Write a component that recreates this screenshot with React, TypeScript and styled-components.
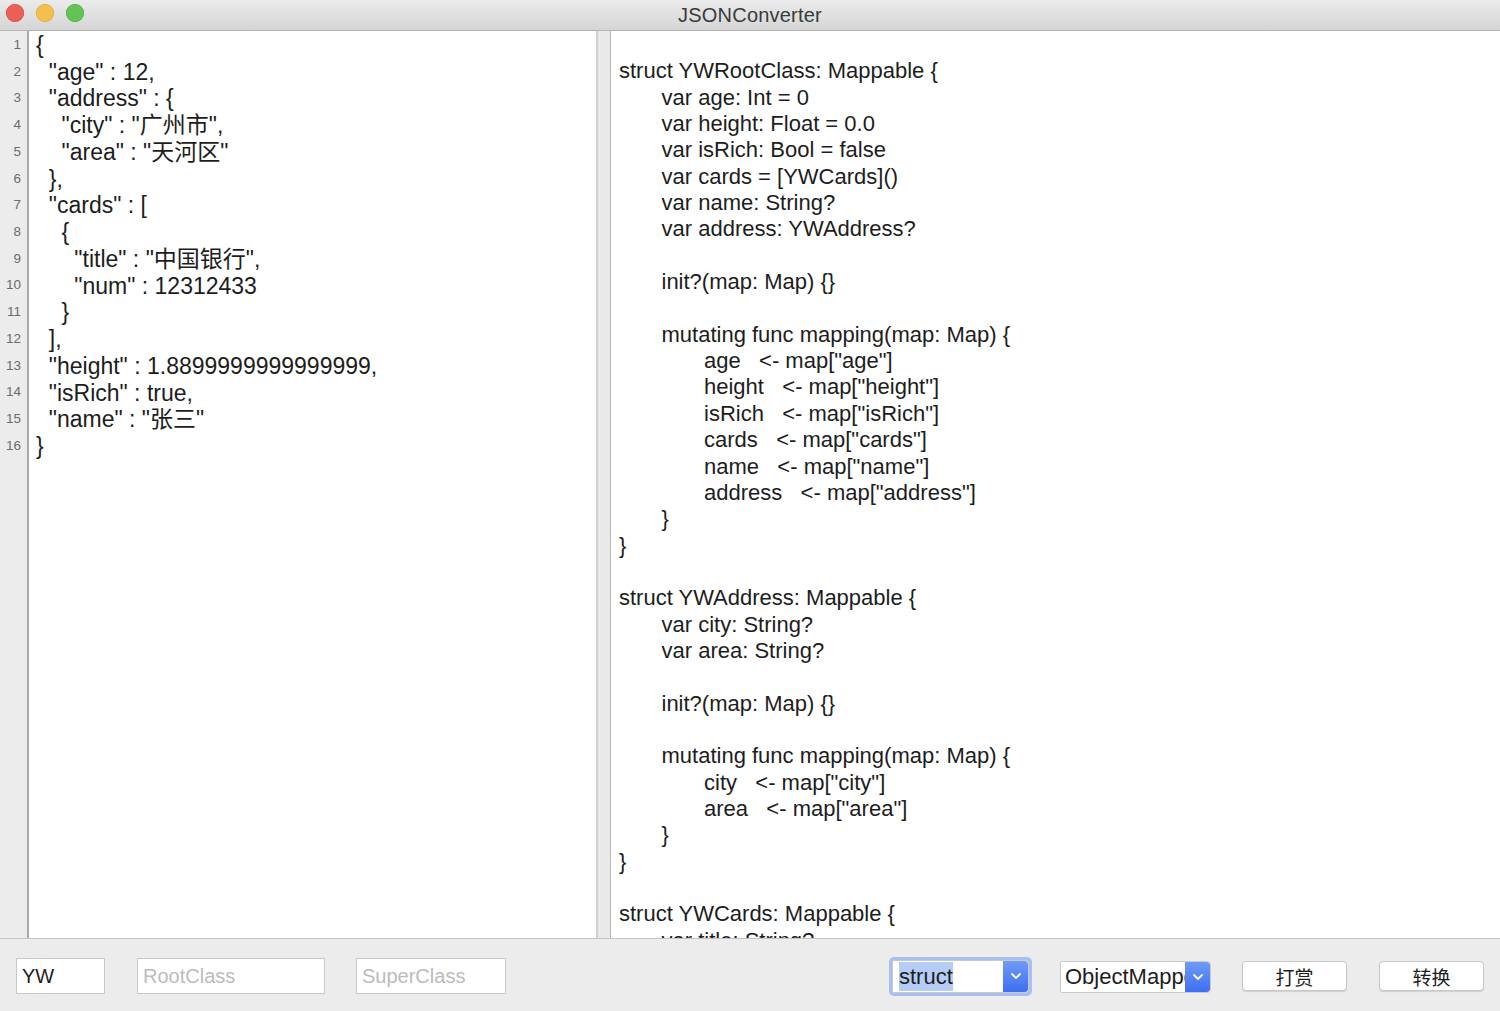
import React from 'react';
import styled, { createGlobalStyle } from 'styled-components';

const FONT = `"Liberation Sans", "Noto Sans CJK SC", sans-serif`;

const GlobalStyle = createGlobalStyle`
  html, body {
    margin: 0;
    padding: 0;
    background: #ececec;
    font-family: ${FONT};
  }
`;

const Window = styled.div`
  display: flex;
  flex-direction: column;
  width: 1500px;
  height: 1011px;
  overflow: hidden;
  background: #ececec;
`;

const TitleBar = styled.div`
  position: relative;
  height: 30px;
  flex-shrink: 0;
  display: flex;
  align-items: center;
  justify-content: center;
  background: linear-gradient(#ebebeb, #d5d5d5);
  border-bottom: 1px solid #b5b5b5;
`;

const Lights = styled.div`
  position: absolute;
  left: 6px;
  top: 4px;
  display: flex;
  gap: 12px;
`;

const Light = styled.span<{ $c: string; $b: string }>`
  width: 18px;
  height: 18px;
  border-radius: 50%;
  background: ${p => p.$c};
  box-shadow: inset 0 0 0 0.5px ${p => p.$b};
`;

const Title = styled.div`
  font-size: 20px;
  color: #3a3a3a;
  letter-spacing: 0.2px;
`;

const Main = styled.div`
  flex: 1;
  display: flex;
  min-height: 0;
  border-bottom: 1px solid #c4c4c4;
`;

const LeftPane = styled.div`
  width: 598px;
  flex-shrink: 0;
  display: flex;
  background: #fff;
  border-right: 2px solid #d0d0d0;
  box-sizing: border-box;
  overflow: hidden;
`;

const Gutter = styled.div`
  width: 27px;
  flex-shrink: 0;
  background: #ececec;
  border-right: 2px solid #a9a9a9;
  padding-top: 1px;
  text-align: right;
  box-sizing: content-box;
`;

const LineNo = styled.div`
  height: 26.73px;
  line-height: 26.73px;
  font-size: 13.5px;
  color: #6b6b6b;
  padding-right: 6px;
`;

const JsonText = styled.pre`
  margin: 0;
  padding: 1px 0 0 7px;
  font-family: ${FONT};
  font-size: 23px;
  line-height: 26.73px;
  color: #1d1d1d;
  white-space: pre;
`;

const Spacer = styled.div`
  width: 12px;
  flex-shrink: 0;
  background: #e9e9e9;
`;

const RightPane = styled.div`
  flex: 1;
  background: #fff;
  border-left: 1px solid #b9b9b9;
  overflow: hidden;
`;

const CodeText = styled.pre`
  margin: 0;
  padding: 1px 0 0 8px;
  font-family: ${FONT};
  font-size: 22px;
  line-height: 26.34px;
  color: #1d1d1d;
  white-space: pre;
  tab-size: 42.5px;
`;

const BottomBar = styled.div`
  height: 72px;
  flex-shrink: 0;
  display: flex;
  align-items: center;
  padding: 0 16px;
  background: #ececec;
`;

const TextField = styled.input<{ $w: number; $ml?: number }>`
  width: ${p => p.$w}px;
  height: 36px;
  margin-left: ${p => p.$ml ?? 0}px;
  margin-top: 2px;
  box-sizing: border-box;
  border: 1px solid #c9c9c9;
  background: #fff;
  padding: 0 5px;
  font-family: ${FONT};
  font-size: 20px;
  color: #1d1d1d;
  outline: none;
  &::placeholder {
    color: #bcbcbc;
  }
`;

const Grow = styled.div`
  flex: 1;
`;

const FocusRing = styled.div`
  width: 143px;
  height: 39px;
  box-sizing: border-box;
  padding: 3px;
  border-radius: 5px;
  background: #a9bff2;
  display: flex;
  margin-top: 2px;
`;

const Popup = styled.div<{ $w: number; $ml?: number }>`
  width: ${p => p.$w}px;
  height: ${p => (p.$w > 140 ? 32 : 33)}px;
  margin-left: ${p => p.$ml ?? 0}px;
  margin-top: ${p => (p.$w > 140 ? 4 : 0)}px;
  display: flex;
  box-sizing: border-box;
  background: #fff;
  border: 1px solid #c9c9c9;
  border-radius: 2px 4px 4px 2px;
  overflow: hidden;
  flex: ${p => (p.$w === 0 ? 1 : 'none')};
`;

const PopupLabel = styled.div<{ $pl?: number }>`
  flex: 1;
  min-width: 0;
  display: flex;
  align-items: center;
  padding-left: ${p => p.$pl ?? 4}px;
  font-size: 22px;
  color: #1d1d1d;
  overflow: hidden;
  white-space: nowrap;
`;

const Selected = styled.span`
  background: #b4ccf6;
  line-height: 29px;
`;

const Arrow = styled.div`
  width: 25px;
  flex-shrink: 0;
  display: flex;
  align-items: center;
  justify-content: center;
  background: linear-gradient(#6f9bf7, #3d6ff0);
  border-radius: 0 3px 3px 0;
`;

const PushButton = styled.button<{ $ml: number }>`
  width: 105px;
  height: 30px;
  margin-left: ${p => p.$ml}px;
  margin-top: 2px;
  background: #fff;
  border: 1px solid #c8c8c8;
  border-radius: 4px;
  box-shadow: 0 1px 1px rgba(0, 0, 0, 0.12);
  font-family: ${FONT};
  font-size: 19px;
  color: #1d1d1d;
  padding: 0;
`;

const json = `{
  "age" : 12,
  "address" : {
    "city" : "广州市",
    "area" : "天河区"
  },
  "cards" : [
    {
      "title" : "中国银行",
      "num" : 12312433
    }
  ],
  "height" : 1.8899999999999999,
  "isRich" : true,
  "name" : "张三"
}`;

const swift = `
struct YWRootClass: Mappable {
\tvar age: Int = 0
\tvar height: Float = 0.0
\tvar isRich: Bool = false
\tvar cards = [YWCards]()
\tvar name: String?
\tvar address: YWAddress?

\tinit?(map: Map) {}

\tmutating func mapping(map: Map) {
\t\tage   <- map["age"]
\t\theight   <- map["height"]
\t\tisRich   <- map["isRich"]
\t\tcards   <- map["cards"]
\t\tname   <- map["name"]
\t\taddress   <- map["address"]
\t}
}

struct YWAddress: Mappable {
\tvar city: String?
\tvar area: String?

\tinit?(map: Map) {}

\tmutating func mapping(map: Map) {
\t\tcity   <- map["city"]
\t\tarea   <- map["area"]
\t}
}

struct YWCards: Mappable {
\tvar title: String?
\tvar num: Int = 0
}`;

const Chevron = () => (
  <svg width="12" height="8" viewBox="0 0 12 8">
    <path d="M2 2 L6 6 L10 2" fill="none" stroke="#fff" strokeWidth="1.8" strokeLinecap="round" strokeLinejoin="round" />
  </svg>
);

const App: React.FC = () => {
  const lines = json.split('\n');
  return (
    <Window>
      <GlobalStyle />
      <TitleBar>
        <Lights>
          <Light $c="#ec5f56" $b="#d24a41" />
          <Light $c="#f4bf4f" $b="#d9a437" />
          <Light $c="#61c454" $b="#4ea83f" />
        </Lights>
        <Title>JSONConverter</Title>
      </TitleBar>
      <Main>
        <LeftPane>
          <Gutter>
            {lines.map((_, i) => (
              <LineNo key={i}>{i + 1}</LineNo>
            ))}
          </Gutter>
          <JsonText>{json}</JsonText>
        </LeftPane>
        <Spacer />
        <RightPane>
          <CodeText>{swift}</CodeText>
        </RightPane>
      </Main>
      <BottomBar>
        <TextField $w={89} defaultValue="YW" />
        <TextField $w={188} $ml={32} placeholder="RootClass" />
        <TextField $w={150} $ml={31} placeholder="SuperClass" />
        <Grow />
        <FocusRing>
          <Popup $w={0}>
            <PopupLabel $pl={6}>
              <Selected>struct</Selected>
            </PopupLabel>
            <Arrow>
              <Chevron />
            </Arrow>
          </Popup>
        </FocusRing>
        <Popup $w={151} $ml={28}>
          <PopupLabel>ObjectMapper</PopupLabel>
          <Arrow>
            <Chevron />
          </Arrow>
        </Popup>
        <PushButton $ml={31}>打赏</PushButton>
        <PushButton $ml={32}>转换</PushButton>
      </BottomBar>
    </Window>
  );
};

export default App;
